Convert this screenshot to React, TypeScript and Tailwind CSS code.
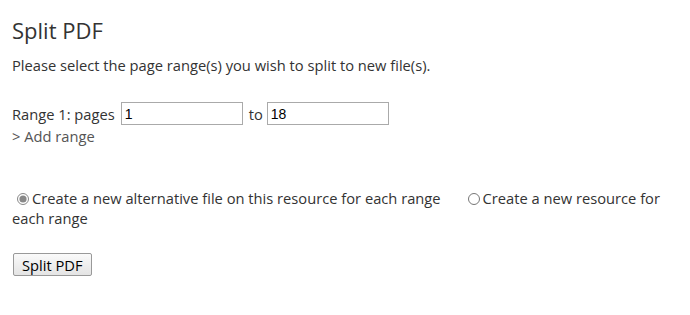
import { useState } from 'react';

export default function App() {
    const [mode, setMode] = useState('alternative');

    return (
        <div className="w-[690px] h-[315px] bg-white pl-3 pr-[10px] pt-[16px] text-[#333] text-[14.7px] leading-[20px]" style={{ fontFamily: '"Open Sans", "Noto Sans", sans-serif' }}>
            <h1 className="text-[22px] leading-[28px] font-normal text-[#333]">Split PDF</h1>
            <p className="mt-[11px]">Please select the page range(s) you wish to split to new file(s).</p>

            <div className="mt-[27px] flex items-center">
                <span>Range 1: pages</span>
                <input
                    defaultValue="1"
                    className="ml-[6px] w-[122px] h-[23px] border border-[#aaa] px-[3px] text-[14px] text-black outline-none"
                    style={{ fontFamily: '"Liberation Sans", sans-serif' }}
                />
                <span className="ml-[6px] mr-1">to</span>
                <input
                    defaultValue="18"
                    className="w-[122px] h-[23px] border border-[#aaa] px-[3px] text-[14px] text-black outline-none"
                    style={{ fontFamily: '"Liberation Sans", sans-serif' }}
                />
            </div>
            <a className="block text-[#555] mt-[1px]" href="#">&gt; Add range</a>

            <div className="mt-[42px] leading-[20px]">
                <label className="mr-[24px]">
                    <input type="radio" name="mode" checked={mode === 'alternative'} onChange={() => setMode('alternative')} className="ml-[5px] mr-[3px] w-[12px] h-[12px] align-[-1px] accent-[#888]" />
                    Create a new alternative file on this resource for each range
                </label>
                <label>
                    <input type="radio" name="mode" checked={mode === 'resource'} onChange={() => setMode('resource')} className="mx-[3px] w-[12px] h-[12px] align-[-1px] accent-[#888]" />
                    Create a new resource for each range
                </label>
            </div>

            <button className="mt-[25px] ml-[1px] h-[23px] px-[8px] border border-[#999] rounded-[2px] bg-gradient-to-b from-[#fafafa] to-[#e4e4e4] text-black text-[14.7px] leading-[20px]">
                Split PDF
            </button>
        </div>
    );
}
